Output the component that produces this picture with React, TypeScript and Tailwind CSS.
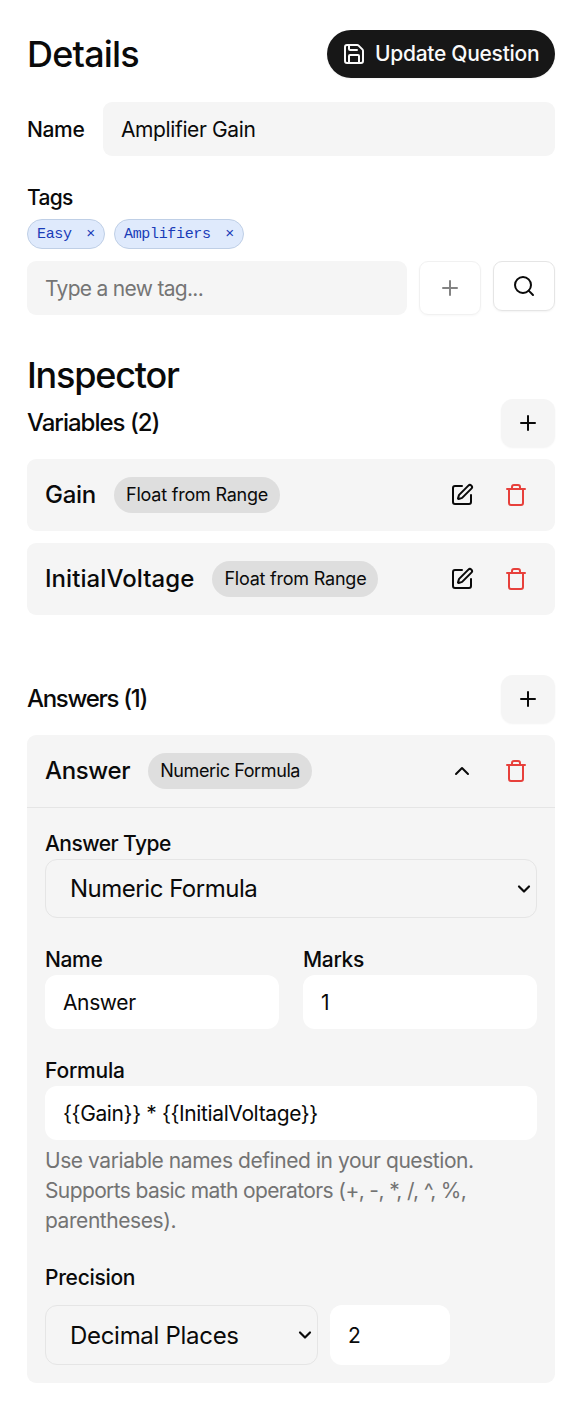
import { useState, type ReactNode } from "react";
import { ChevronDown, ChevronUp, Plus, Save, Search, SquarePen, Trash } from "lucide-react";
import clsx from "clsx";

const variables = [
  { name: "Gain", type: "Float from Range", spacing: "tracking-[-0.25px]" },
  { name: "InitialVoltage", type: "Float from Range", spacing: "tracking-[0.07px]" },
];

type ChildrenProps = { className?: string; children: ReactNode };

const Label = ({ className, children }: ChildrenProps) => (
  <label
    className={clsx(
      "block pt-px text-[21px] leading-[29px] font-medium",
      className ?? "tracking-[-0.35px]",
    )}
  >
    {children}
  </label>
);

const TypeBadge = ({ className, children }: ChildrenProps) => (
  <span
    className={clsx(
      "ml-[18px] flex h-9 items-center rounded-full bg-[#dedede] px-3 pb-px text-[18px] whitespace-nowrap",
      className,
    )}
  >
    {children}
  </span>
);

type InputProps = { className?: string; value?: string; placeholder?: string };

const Input = ({ className, value = "", placeholder }: InputProps) => {
  const [text, setText] = useState(value);

  return (
    <input
      className={clsx(
        "block min-w-0 px-[18px] pt-px text-[21px] tracking-[-0.38px] outline-none placeholder:tracking-[-0.7px] placeholder:text-[#757575]",
        className,
      )}
      value={text}
      placeholder={placeholder}
      onChange={(e) => setText(e.target.value)}
    />
  );
};

const Select = ({ className, value }: { className?: string; value: string }) => (
  <div className={clsx("relative", className)}>
    <select className="block h-full w-full appearance-none rounded-xl border border-[#e5e5e5] bg-transparent pt-px pl-6 text-[24px] outline-none">
      <option>{value}</option>
    </select>
    <ChevronDown className="pointer-events-none absolute top-1/2 right-[3px] size-5 -translate-y-1/2" strokeWidth={2.6} />
  </div>
);

type SectionHeaderProps = { className?: string; title: string; onAdd?: () => void };

const SectionHeader = ({ className, title, onAdd }: SectionHeaderProps) => (
  <div className={clsx("flex h-12 items-center justify-between", className)}>
    <h3 className="text-[24px] font-medium">{title}</h3>
    <button
      onClick={onAdd}
      className="flex h-12 w-[54px] items-center justify-center rounded-xl bg-[#f5f5f5] tracking-normal shadow-xs"
    >
      <Plus className="size-6" strokeWidth={2} />
    </button>
  </div>
);

export default function App() {
  const [isOpen, setIsOpen] = useState(true);

  return (
    <main className="h-[1415px] w-[584px] bg-white pt-[30px] pr-[29px] pl-[27px] font-['Inter',sans-serif] text-[#0a0a0a]">
      <div className="flex h-12 items-center justify-between">
        <h2 className="text-[36px] font-medium tracking-[-0.8px]">Details</h2>
        <button className="flex h-12 w-[228px] items-center gap-[9px] rounded-full bg-[#171717] pl-[15px] text-[21px] font-medium tracking-[-0.28px] whitespace-nowrap text-[#fafafa] shadow-xs">
          <Save className="size-6 shrink-0" />
          Update Question
        </button>
      </div>

      <div className="mt-6 flex items-center">
        <Label className="w-[76px] pt-[3px] tracking-[-0.35px]">Name</Label>
        <Input className="h-[54px] flex-1 rounded-[9px] bg-[#f5f5f5]" value="Amplifier Gain" />
      </div>

      <Label className="mt-[26px] tracking-[-0.7px]">Tags</Label>
      <div className="mt-[7px] flex gap-[9px] font-['Liberation_Mono',monospace] text-[15px] tracking-[-0.33px] text-[#193cb8]">
        <span className="flex h-[30px] w-[78px] items-center justify-between rounded-full border border-[#bfcfe6] bg-[#dfeafc] px-[9px] pt-[3px]">
          Easy <button>×</button>
        </span>
        <span className="flex h-[30px] w-[130px] items-center justify-between rounded-full border border-[#bfcfe6] bg-[#dfeafc] px-[9px] pt-[3px]">
          Amplifiers <button>×</button>
        </span>
      </div>
      <div className="mt-3 flex items-start gap-3">
        <Input className="h-[54px] flex-1 rounded-[9px] bg-[#f5f5f5]" placeholder="Type a new tag..." />
        <button
          disabled
          className="flex h-[54px] w-[62px] items-center justify-center rounded-[9px] border border-[#e5e5e5] opacity-50 shadow-xs"
        >
          <Plus className="size-6" />
        </button>
        <button className="flex h-[50px] w-[62px] items-center justify-center rounded-[9px] border border-[#e5e5e5] shadow-xs">
          <Search className="size-6" />
        </button>
      </div>

      <h2 className="mt-9 text-[36px] leading-12 font-medium tracking-[-1.2px]">Inspector</h2>
      <SectionHeader className="tracking-[-1px]" title="Variables (2)" />
      <div className="mt-3 flex flex-col gap-3">
        {variables.map((variable) => (
          <div key={variable.name} className="flex h-[72px] items-center rounded-[9px] bg-[#f5f5f5] pr-[27px] pl-[18px]">
            <span className={clsx("text-[24px] font-medium", variable.spacing)}>{variable.name}</span>
            <TypeBadge className="tracking-[-0.22px]">{variable.type}</TypeBadge>
            <button className="ml-auto">
              <SquarePen className="size-6" />
            </button>
            <button className="ml-[30px] text-[#e7403b]">
              <Trash className="size-6" />
            </button>
          </div>
        ))}
      </div>

      <SectionHeader className="mt-[60px] tracking-[-1.3px]" title="Answers (1)" />
      <section className="mt-3 h-[648px] rounded-[9px] bg-[#f5f5f5]">
        <div className="flex h-[73px] items-center border-b border-[#e5e5e5] pr-[27px] pl-[18px]">
          <span className="text-[24px] font-medium tracking-[-0.35px]">Answer</span>
          <TypeBadge className="tracking-[-0.4px]">Numeric Formula</TypeBadge>
          <button className="ml-auto" onClick={() => setIsOpen(!isOpen)}>
            <ChevronUp className="size-6" />
          </button>
          <button className="ml-[30px] text-[#e7403b]">
            <Trash className="size-6" />
          </button>
        </div>
        {isOpen && (
          <div className="px-[18px] pt-5">
            <Label className="tracking-[-0.55px]">Answer Type</Label>
            <Select className="mt-px h-[59px] tracking-[-0.48px]" value="Numeric Formula" />

            <div className="mt-[26px] grid grid-cols-2 gap-6">
              <div>
                <Label>Name</Label>
                <Input className="mt-px h-[54px] w-full rounded-xl bg-white" value="Answer" />
              </div>
              <div>
                <Label>Marks</Label>
                <Input className="mt-px h-[54px] w-full rounded-xl bg-white" value="1" />
              </div>
            </div>

            <Label className="mt-[26px] tracking-[-0.2px]">Formula</Label>
            <Input className="mt-px h-[54px] w-full rounded-xl bg-white" value="{{Gain}} * {{InitialVoltage}}" />
            <p className="mt-[6px] text-[21px] leading-[30px] tracking-[-0.44px] text-[#737373]">
              Use variable names defined in your question.
              <br />
              <span className="tracking-[-0.62px]">Supports basic math operators (+, -, *, /, ^, %,</span>
              <br />
              parentheses).
            </p>

            <Label className="mt-[26px] tracking-[-0.3px]">Precision</Label>
            <div className="mt-[13px] flex gap-3">
              <Select className="h-[60px] w-[273px] tracking-[-0.3px]" value="Decimal Places" />
              <Input className="h-[60px] w-[120px] rounded-xl bg-white" value="2" />
            </div>
          </div>
        )}
      </section>
    </main>
  );
}
